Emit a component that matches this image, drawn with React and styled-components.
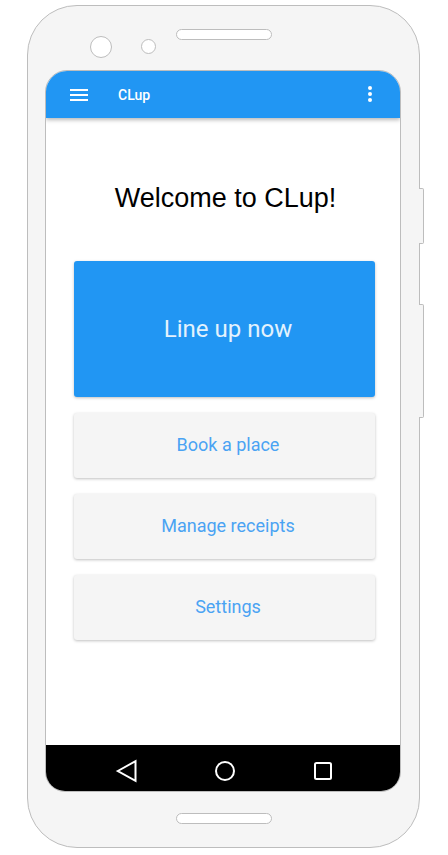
import styled, { createGlobalStyle } from "styled-components"

const GlobalStyle = createGlobalStyle`
body {
    margin: 0;
    background: #ffffff;
    font-family: Roboto, "Noto Sans", sans-serif;
}
* {
    box-sizing: border-box;
}
`

const menuItems = ["Book a place", "Manage receipts", "Settings"]

export default function App() {
    return (
        <>
            <GlobalStyle />
            <Phone>
                <SideButton $top={182} $height={56} />
                <SideButton $top={298} $height={114} />
                <TopBezel>
                    <Lens $size={22} $offset={7} $gap={29} />
                    <Lens $size={15} $offset={10} $gap={20} />
                    <Speaker />
                </TopBezel>
                <Screen>
                    <AppBar>
                        <IconButton aria-label="menu">
                            <svg width="24" height="24" viewBox="0 0 24 24" fill="#fff">
                                <rect x="3" y="6" width="18" height="2" />
                                <rect x="3" y="11" width="18" height="2" />
                                <rect x="3" y="16" width="18" height="2" />
                            </svg>
                        </IconButton>
                        <AppTitle>CLup</AppTitle>
                        <IconButton aria-label="more" $shift={-2}>
                            <svg width="24" height="24" viewBox="0 0 24 24" fill="#fff">
                                <circle cx="12" cy="6" r="2" />
                                <circle cx="12" cy="12" r="2" />
                                <circle cx="12" cy="18" r="2" />
                            </svg>
                        </IconButton>
                    </AppBar>
                    <Content>
                        <Welcome>Welcome to CLup!</Welcome>
                        <PrimaryButton>Line up now</PrimaryButton>
                        {menuItems.map((label) => (
                            <MenuButton key={label}>{label}</MenuButton>
                        ))}
                    </Content>
                    <NavBar>
                        <svg width="24" height="24" viewBox="0 0 24 24" fill="none" stroke="#fff" strokeWidth="2">
                            <path d="M2.8 12 L20.5 2.2 L20.5 21.8 Z" strokeLinejoin="miter" />
                        </svg>
                        <svg width="24" height="24" viewBox="0 0 24 24" fill="none" stroke="#fff" strokeWidth="2">
                            <circle cx="12" cy="12" r="9" />
                        </svg>
                        <svg width="24" height="24" viewBox="0 0 24 24" fill="none" stroke="#fff" strokeWidth="2">
                            <rect x="4" y="4" width="16" height="16" rx="1.5" />
                        </svg>
                    </NavBar>
                </Screen>
                <BottomBezel>
                    <Speaker />
                </BottomBezel>
            </Phone>
        </>
    )
}

const Phone = styled.div`
position: relative;
margin: 5px 0 0 27px;
width: 393px;
height: 843px;
border: 1px solid #bdbdbd;
border-radius: 50px;
background: #f5f5f5;
display: flex;
flex-direction: column;
`

const SideButton = styled.div`
position: absolute;
right: -5px;
top: ${(p) => p.$top}px;
width: 5px;
height: ${(p) => p.$height}px;
background: #f5f5f5;
border: 1px solid #bdbdbd;
border-left: none;
border-radius: 0 2px 2px 0;
`

const TopBezel = styled.div`
height: 64px;
display: flex;
align-items: flex-start;
padding: 23px 0 0 62px;
`

const Lens = styled.div`
width: ${(p) => p.$size}px;
height: ${(p) => p.$size}px;
margin-top: ${(p) => p.$offset}px;
margin-right: ${(p) => p.$gap}px;
border: 1px solid #bdbdbd;
border-radius: 50%;
background: #ffffff;
`

const Speaker = styled.div`
width: 96px;
height: 11px;
border: 1px solid #bdbdbd;
border-radius: 6px;
background: #ffffff;
`

const Screen = styled.div`
margin: 0 18px 0 17px;
height: 722px;
border: 1px solid #bdbdbd;
border-radius: 22px 22px 20px 20px;
overflow: hidden;
display: flex;
flex-direction: column;
background: #ffffff;
`

const AppBar = styled.div`
position: relative;
z-index: 1;
height: 47px;
flex-shrink: 0;
display: flex;
align-items: center;
padding: 0 18px 0 21px;
background: #2196f3;
box-shadow: 0 2px 4px rgba(0, 0, 0, 0.28);
`

const IconButton = styled.div`
width: 24px;
height: 24px;
display: flex;
margin-top: ${(p) => p.$shift || 0}px;
`

const AppTitle = styled.div`
flex: 1;
margin-left: 27px;
color: #ffffff;
font-size: 14px;
font-weight: 500;
`

const Content = styled.div`
flex: 1;
display: flex;
flex-direction: column;
padding: 64px 25px 0 28px;
`

const Welcome = styled.h1`
margin: 0 0 47px;
padding-left: 2px;
font-family: "Liberation Sans", Arial, sans-serif;
font-size: 27px;
line-height: 32px;
font-weight: 400;
color: #000000;
text-align: center;
`

const PrimaryButton = styled.button`
height: 136px;
padding: 0 0 0 7px;
border: none;
border-radius: 3px;
background: #2196f3;
color: #e3f2fd;
font-family: Roboto, sans-serif;
font-size: 24px;
box-shadow: 0 1px 3px rgba(0, 0, 0, 0.25);
cursor: pointer;
`

const MenuButton = styled.button`
height: 65px;
margin-top: 16px;
padding: 0 0 2px 7px;
border: none;
border-radius: 3px;
background: #f5f5f5;
color: #4aa3f3;
font-family: Roboto, sans-serif;
font-size: 18px;
box-shadow: 0 1px 3px rgba(0, 0, 0, 0.25);
cursor: pointer;
`

const NavBar = styled.div`
height: 46px;
flex-shrink: 0;
display: flex;
justify-content: center;
align-items: center;
gap: 74px;
padding: 5px 0 0 3px;
background: #000000;
`

const BottomBezel = styled.div`
flex: 1;
display: flex;
justify-content: center;
padding-top: 21px;
`
